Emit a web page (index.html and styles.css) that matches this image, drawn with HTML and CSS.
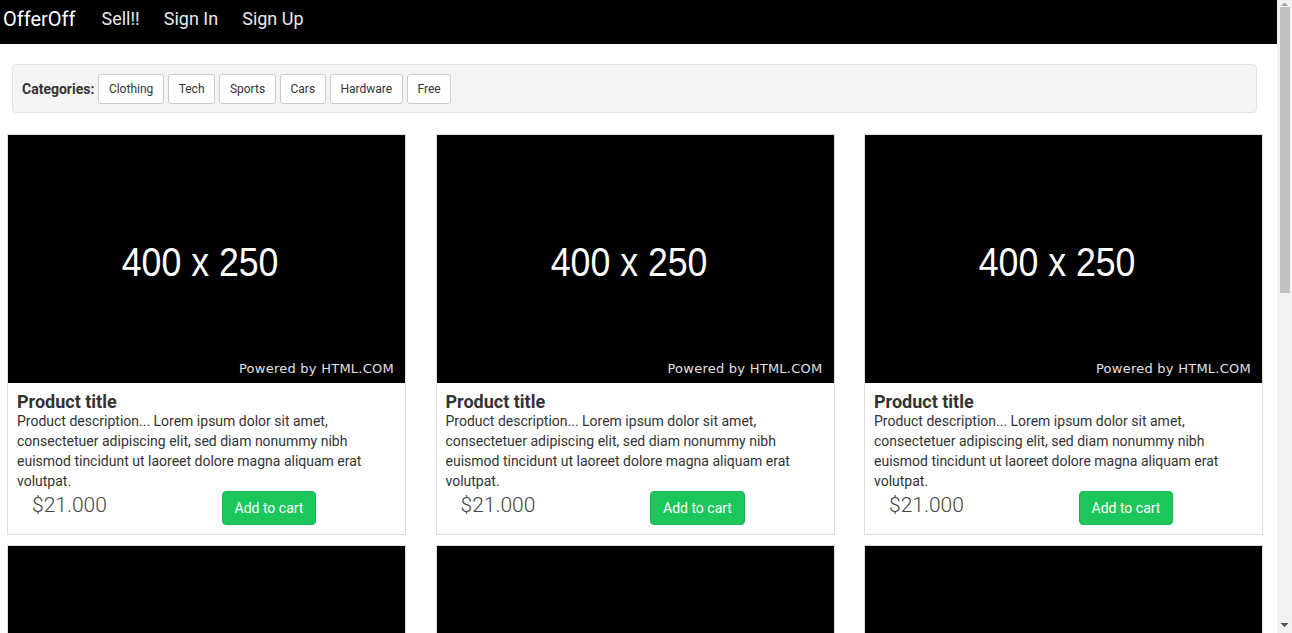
FILE: index.html
```html
<!DOCTYPE html>
<html>
<head>
<meta charset="utf-8">
<title>OfferOff</title>
<link rel="stylesheet" href="styles.css">
</head>
<body>
<nav class="navbar">
  <a class="brand" href="#">OfferOff</a>
  <a class="nav-link" href="#">Sell!!</a>
  <a class="nav-link" href="#">Sign In</a>
  <a class="nav-link" href="#">Sign Up</a>
</nav>
<div class="categories">
  <span class="cat-label">Categories:</span>
  <button class="cat-btn">Clothing</button>
  <button class="cat-btn">Tech</button>
  <button class="cat-btn">Sports</button>
  <button class="cat-btn">Cars</button>
  <button class="cat-btn">Hardware</button>
  <button class="cat-btn">Free</button>
</div>
<div class="grid">
  <div class="card">
    <div class="thumb"><span class="thumb-size">400 x 250</span><span class="thumb-credit">Powered by HTML.COM</span></div>
    <div class="card-body">
      <div class="title">Product title</div>
      <p class="desc">Product description... Lorem ipsum dolor sit amet, consectetuer adipiscing elit, sed diam nonummy nibh euismod tincidunt ut laoreet dolore magna aliquam erat volutpat.</p>
      <div class="buy-row"><div class="half"><span class="price">$21.000</span></div><div class="half"><button class="cart-btn">Add to cart</button></div></div>
    </div>
  </div>
  <div class="card">
    <div class="thumb"><span class="thumb-size">400 x 250</span><span class="thumb-credit">Powered by HTML.COM</span></div>
    <div class="card-body">
      <div class="title">Product title</div>
      <p class="desc">Product description... Lorem ipsum dolor sit amet, consectetuer adipiscing elit, sed diam nonummy nibh euismod tincidunt ut laoreet dolore magna aliquam erat volutpat.</p>
      <div class="buy-row"><div class="half"><span class="price">$21.000</span></div><div class="half"><button class="cart-btn">Add to cart</button></div></div>
    </div>
  </div>
  <div class="card">
    <div class="thumb"><span class="thumb-size">400 x 250</span><span class="thumb-credit">Powered by HTML.COM</span></div>
    <div class="card-body">
      <div class="title">Product title</div>
      <p class="desc">Product description... Lorem ipsum dolor sit amet, consectetuer adipiscing elit, sed diam nonummy nibh euismod tincidunt ut laoreet dolore magna aliquam erat volutpat.</p>
      <div class="buy-row"><div class="half"><span class="price">$21.000</span></div><div class="half"><button class="cart-btn">Add to cart</button></div></div>
    </div>
  </div>
  <div class="card">
    <div class="thumb"><span class="thumb-size">400 x 250</span><span class="thumb-credit">Powered by HTML.COM</span></div>
    <div class="card-body">
      <div class="title">Product title</div>
      <p class="desc">Product description... Lorem ipsum dolor sit amet, consectetuer adipiscing elit, sed diam nonummy nibh euismod tincidunt ut laoreet dolore magna aliquam erat volutpat.</p>
      <div class="buy-row"><div class="half"><span class="price">$21.000</span></div><div class="half"><button class="cart-btn">Add to cart</button></div></div>
    </div>
  </div>
  <div class="card">
    <div class="thumb"><span class="thumb-size">400 x 250</span><span class="thumb-credit">Powered by HTML.COM</span></div>
    <div class="card-body">
      <div class="title">Product title</div>
      <p class="desc">Product description... Lorem ipsum dolor sit amet, consectetuer adipiscing elit, sed diam nonummy nibh euismod tincidunt ut laoreet dolore magna aliquam erat volutpat.</p>
      <div class="buy-row"><div class="half"><span class="price">$21.000</span></div><div class="half"><button class="cart-btn">Add to cart</button></div></div>
    </div>
  </div>
  <div class="card">
    <div class="thumb"><span class="thumb-size">400 x 250</span><span class="thumb-credit">Powered by HTML.COM</span></div>
    <div class="card-body">
      <div class="title">Product title</div>
      <p class="desc">Product description... Lorem ipsum dolor sit amet, consectetuer adipiscing elit, sed diam nonummy nibh euismod tincidunt ut laoreet dolore magna aliquam erat volutpat.</p>
      <div class="buy-row"><div class="half"><span class="price">$21.000</span></div><div class="half"><button class="cart-btn">Add to cart</button></div></div>
    </div>
  </div>
</div>
<div class="scrollbar" aria-hidden="true">
  <svg class="sb-arrow sb-up" width="15" height="7" viewBox="0 0 15 7"><polygon points="4,6 11,6 7.5,2.5" fill="#a3a3a3"/></svg>
  <div class="sb-thumb"></div>
  <svg class="sb-arrow sb-down" width="15" height="14" viewBox="0 0 15 14"><polygon points="3.5,4 11.5,4 7.5,8" fill="#505050"/></svg>
</div>
</body>
</html>
```
FILE: styles.css
```css
* { box-sizing: border-box; }
html, body { margin: 0; padding: 0; }
body {
  font-family: Roboto, "Liberation Sans", Arial, sans-serif;
  font-size: 14px;
  line-height: 20px;
  color: #333;
  background: #fff;
  margin-right: 15px;
}
.navbar {
  background: #000;
  height: 44px;
  display: flex;
  align-items: center;
  padding: 0 0 6px 3px;
}
.navbar a { text-decoration: none; }
.brand {
  color: #fff;
  font-size: 20px;
  margin-right: 26px;
}
.nav-link {
  color: #e8e8f0;
  font-size: 18px;
  margin-right: 24px;
}
.categories {
  margin: 20px 20px 21px 12px;
  height: 49px;
  background: #f4f4f4;
  border: 1px solid #e3e3e3;
  border-radius: 4px;
  display: flex;
  align-items: center;
  padding: 0 9px;
  gap: 4.4px;
}
.cat-label {
  font-weight: bold;
  font-size: 14px;
  color: #333;
  margin-right: -0.4px;
}
.cat-btn {
  height: 30px;
  padding: 0 9.5px;
  font-family: Roboto, "Liberation Sans", Arial, sans-serif;
  font-size: 12px;
  color: #333;
  background: #fff;
  border: 1px solid #ccc;
  border-radius: 3px;
}
.grid {
  display: grid;
  grid-template-columns: repeat(3, 399px);
  column-gap: 29.5px;
  row-gap: 10px;
  padding-left: 7px;
}
.card {
  border: 1px solid #ddd;
  background: #fff;
}
.thumb {
  position: relative;
  height: 248px;
  background: #000;
  display: flex;
  align-items: center;
  justify-content: center;
}
.thumb-size {
  color: #fff;
  font-family: "Liberation Sans", Arial, sans-serif;
  font-size: 41px;
  line-height: 44px;
  margin-top: 6px;
  transform: translateX(-6px) scaleX(0.87);
}
.thumb-credit {
  position: absolute;
  right: 11px;
  bottom: 6px;
  color: #e0e0e0;
  font-family: "DejaVu Sans", sans-serif;
  font-size: 13px;
  line-height: 16px;
  letter-spacing: 0.25px;
}
.card-body {
  padding: 9px 9px 9px;
}
.title {
  font-size: 18px;
  font-weight: bold;
  line-height: 19px;
  color: #333;
}
.desc {
  margin: 0;
  font-size: 14px;
  line-height: 20px;
  color: #333;
}
.buy-row {
  display: flex;
}
.half {
  flex: 1 1 0;
  padding: 0 15px;
}
.price {
  display: block;
  font-size: 21px;
  font-weight: 300;
  line-height: 28px;
  color: #444;
}
.cart-btn {
  font-family: Roboto, "Liberation Sans", Arial, sans-serif;
  font-size: 14px;
  line-height: 20px;
  padding: 6px 12px;
  color: #fff;
  background: #1bc75b;
  border: 1px solid #17b650;
  border-radius: 4px;
}
.scrollbar {
  position: fixed;
  top: 0;
  right: 0;
  width: 15px;
  height: 100vh;
  background: #f1f1f1;
  display: flex;
  flex-direction: column;
}
.sb-arrow { display: block; flex: none; }
.sb-thumb {
  flex: none;
  height: 286px;
  margin: 0 2px 0 3px;
  background: #c1c1c1;
}
.sb-down { margin-top: auto; }
```
